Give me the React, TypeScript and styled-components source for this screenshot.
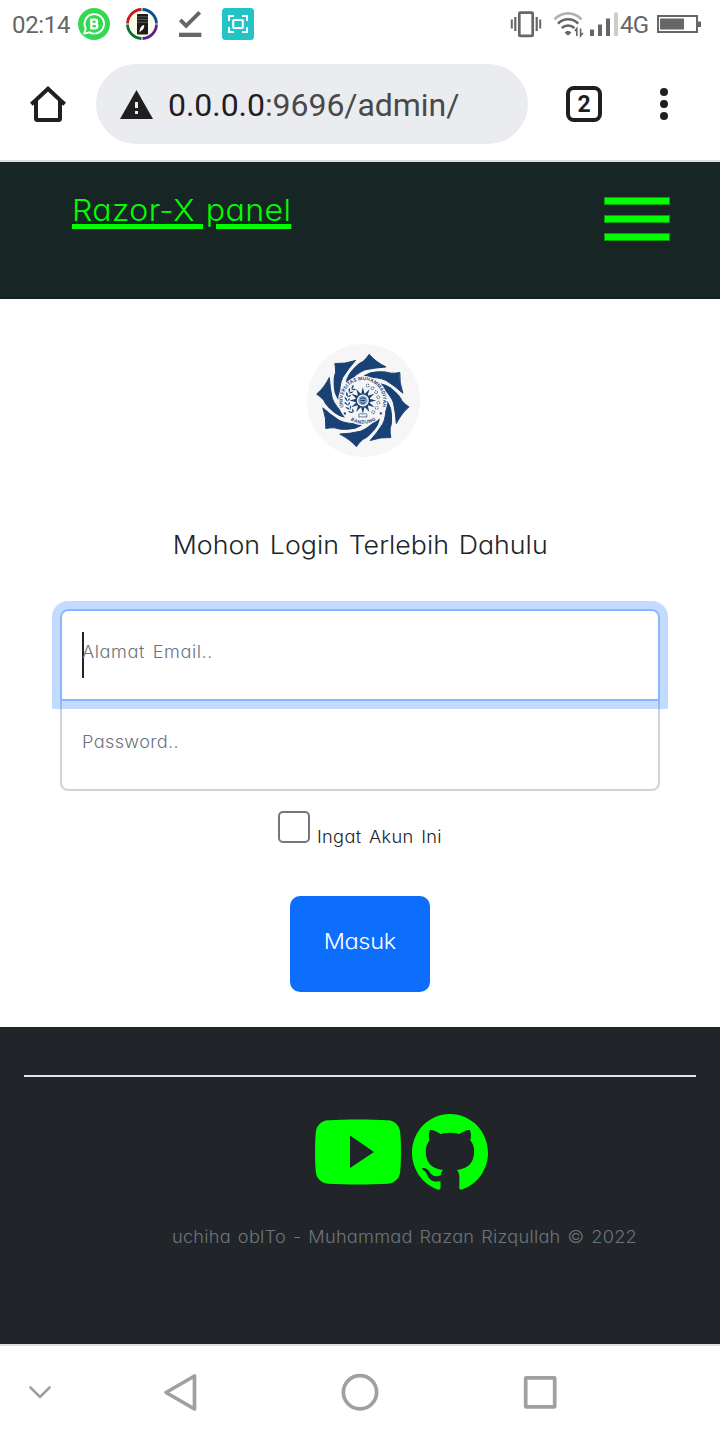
import React from "react";
import styled, { createGlobalStyle } from "styled-components";

const GlobalStyle = createGlobalStyle`
  * { box-sizing: border-box; }
  body { margin: 0; background: #fff; }
  svg { display: block; flex: none; }
`;

const panelFont = `"Inter", "Lato", sans-serif`;

const Screen = styled.div`
  width: 720px;
  height: 1440px;
  display: flex;
  flex-direction: column;
  overflow: hidden;
  background: #fff;
  font-family: ${panelFont};
  font-feature-settings: "cv11" 1;
  font-weight: 300;
  color: #212529;
`;

/* The panel's wide lettering */
const WideText = styled.span<{ $spacing: number; $word: number; $origin?: string }>`
  display: inline-block;
  transform: scaleX(1.07);
  transform-origin: ${(p) => p.$origin ?? "left"};
  letter-spacing: ${(p) => p.$spacing}px;
  word-spacing: ${(p) => p.$word}px;
  white-space: nowrap;
`;

/* System status bar */
const StatusBar = styled.div`
  height: 48px;
  flex: none;
  display: flex;
  align-items: center;
  padding: 0 18px 0 12px;
  font-family: Roboto, sans-serif;
  font-weight: 400;
  color: #666;
`;
const Clock = styled.span`
  width: 66px;
  font-size: 24px;
  line-height: 48px;
  padding-top: 2px;
  letter-spacing: -0.35px;
  white-space: nowrap;
`;
const Notices = styled.div`
  display: flex;
  gap: 16px;
  flex: 1;
`;
const Signals = styled.div`
  display: flex;
  align-items: center;
`;
const Spacer = styled.span<{ $w: number }>`
  width: ${(p) => p.$w}px;
`;
const Network = styled.span`
  width: 37px;
  font-size: 24px;
  line-height: 48px;
  padding-top: 2px;
  letter-spacing: -0.8px;
`;

/* Browser toolbar */
const Toolbar = styled.div`
  height: 114px;
  flex: none;
  display: flex;
  align-items: center;
  padding: 0 36px 0 28px;
  border-bottom: 2px solid #dcdfde;
`;
const AddressPill = styled.div`
  width: 432px;
  height: 80px;
  margin: 0 38px 0 28px;
  padding-left: 24px;
  border-radius: 40px;
  background: #ebecf0;
  display: flex;
  align-items: center;
  gap: 15px;
`;
const Address = styled.span`
  font-family: Roboto, sans-serif;
  font-weight: 400;
  font-size: 32px;
  line-height: 40px;
  padding-top: 2px;
  color: #47494b;
  letter-spacing: -0.05px;
  white-space: nowrap;
  b { font-weight: 400; color: #1f1f1f; }
`;
const TabCount = styled.div`
  width: 36px;
  height: 36px;
  border: 4px solid #1f1f1f;
  border-radius: 8px;
  color: #1f1f1f;
  font: 700 23px/29px Roboto, sans-serif;
  text-align: center;
  margin-right: 58px;
`;
const Dots = styled.div`
  display: flex;
  flex-direction: column;
  gap: 4px;
  i { width: 8px; height: 8px; border-radius: 50%; background: #1f1f1f; }
`;

/* Site header */
const SiteHeader = styled.header`
  height: 137px;
  flex: none;
  display: flex;
  justify-content: space-between;
  align-items: flex-start;
  padding: 28px 50px 0 72px;
  background: #172624;
  border-bottom: 2px solid #14201f;
`;
const Brand = styled(WideText)`
  font-size: 30px;
  line-height: 40px;
  color: #0f0;
  text-decoration: underline;
  text-decoration-thickness: 5px;
  text-underline-offset: 3px;
`;
const MenuButton = styled.div`
  display: flex;
  flex-direction: column;
  gap: 10px;
  padding-top: 7px;
  i { width: 66px; height: 8px; background: #0f0; border: 1px solid #099e0a; }
`;

/* Login form */
const Main = styled.main`
  height: 728px;
  flex: none;
  display: flex;
  flex-direction: column;
  align-items: center;
  padding-top: 45px;
`;
const LogoWrap = styled.div`
  padding-left: 6px;
  height: 113px;
`;
const Heading = styled.h1`
  margin: 68px 0 44px;
  font-size: 25px;
  line-height: 40px;
  font-weight: 300;
`;
const Field = styled.div<{ $focused?: boolean }>`
  width: 600px;
  height: 92px;
  flex: none;
  display: flex;
  position: relative;
  z-index: ${(p) => (p.$focused ? 1 : 0)};
  border: 2px solid ${(p) => (p.$focused ? "#86b7fe" : "#ced4da")};
  border-radius: ${(p) => (p.$focused ? "8px 8px 0 0" : "0 0 8px 8px")};
  box-shadow: ${(p) => (p.$focused ? "0 0 0 8px rgba(13, 110, 253, 0.25)" : "none")};
  margin-top: ${(p) => (p.$focused ? 0 : "-2px")};
  padding: 21px 20px;
`;
const Caret = styled.i`
  width: 2px;
  height: 46px;
  margin-right: -2px;
  background: #212529;
`;
const Placeholder = styled(WideText)`
  font-size: 17px;
  line-height: 40px;
  color: #6c757d;
`;
const Remember = styled.label`
  width: 164px;
  margin-top: 20px;
  height: 46px;
  display: flex;
  gap: 7px;
  font-size: 17px;
  line-height: 52px;
`;
const Checkbox = styled.i`
  width: 32px;
  height: 32px;
  flex: none;
  border: 2px solid #767676;
  border-radius: 5px;
`;
const Submit = styled.button`
  width: 140px;
  height: 96px;
  flex: none;
  margin-top: 39px;
  padding: 0 0 6px;
  border: 0;
  border-radius: 10px;
  background: #0d6efd;
  color: #fff;
  font: inherit;
  font-feature-settings: inherit;
  font-size: 22px;
`;

/* Site footer */
const Footer = styled.footer`
  height: 317px;
  flex: none;
  padding: 48px 24px 0;
  background: #212529;
`;
const Rule = styled.div`
  height: 2px;
  background: #e4e5e5;
`;
const Socials = styled.div`
  display: flex;
  align-items: center;
  gap: 11px;
  margin: 37px 0 0 291px;
`;
const Credit = styled.p`
  margin: 27px 0 0 148px;
  font-size: 17px;
  line-height: 40px;
  color: #6c757d;
`;

/* System navigation */
const NavBar = styled.nav`
  height: 96px;
  flex: none;
  display: grid;
  grid-template-columns: 134px 178px 180px 40px;
  align-items: center;
  padding: 0 0 2px 28px;
  border-top: 2px solid #dedfe0;
`;

const Business = () => (
  <svg width="32" height="32" viewBox="0 0 32 32">
    <circle cx="16" cy="16" r="16" fill="#36d853" />
    <path d="M6.200 25.600 7.700 20.400A9.700 9.700 0 1 1 11.500 24.300Z" fill="none" stroke="#fff" strokeWidth="1.900" strokeLinejoin="round" />
    <path d="M13.400 11.700h3.600a2 2 0 0 1 0 4.100h-3.600zM13.400 15.800h4.100a2.300 2.300 0 0 1 0 4.500h-4.100z" fill="none" stroke="#fff" strokeWidth="2.300" />
  </svg>
);

const ColorRing = () => (
  <svg width="32" height="32" viewBox="0 0 32 32">
    <circle cx="16" cy="16" r="14.500" fill="#fbfcec" />
    <g fill="none" strokeWidth="2.800">
      <path d="M1.500 15.500A14.500 14.500 0 0 1 15.500 1.500" stroke="#c81b1b" />
      <path d="M16.500 1.500A14.500 14.500 0 0 1 30.500 15.500" stroke="#0b4b93" />
      <path d="M30.500 16.500A14.500 14.500 0 0 1 16.500 30.500" stroke="#5b2389" />
      <path d="M15.500 30.500A14.500 14.500 0 0 1 1.500 16.500" stroke="#0c7030" />
    </g>
    <rect x="11" y="6" width="11" height="20.500" rx=".8" fill="#1d1b1c" />
    <path d="M11 8.800h11M11 11.500h11M11 14.200h11" stroke="#77736d" strokeWidth=".7" />
    <path d="M13.500 24.500c.2-4.500 1.600-7 4.700-7.600.2 2.600-.8 5-3.200 5.800z" fill="#fff" />
  </svg>
);

const Downloaded = () => (
  <svg width="32" height="32" viewBox="0 0 32 32">
    <path d="m6.300 11.800 5.800 6L25.700 4.300" fill="none" stroke="#666" strokeWidth="3.900" />
    <path d="M5 24.700h22.300V29H5z" fill="#666" />
  </svg>
);

const Scanner = () => (
  <svg width="32" height="32" viewBox="0 0 32 32">
    <rect width="32" height="32" rx="3.500" fill="#24c4c6" />
    <g fill="none" stroke="#fff" strokeWidth="2">
      <path d="M7 13V8h5M20 8h5v5M25 19v5h-5M12 24H7v-5" />
      <rect x="11.200" y="12" width="9.600" height="8" rx=".8" />
    </g>
  </svg>
);

const Vibrate = () => (
  <svg width="32" height="30" viewBox="0 0 32 30">
    <g fill="none" stroke="#666">
      <rect x="9.300" y="3.700" width="13.400" height="23.200" rx="1" strokeWidth="2.700" />
      <path d="M5.300 8v14M26.700 8v14" strokeWidth="2.200" />
      <path d="M1.800 10.500v9M30.200 10.500v9" strokeWidth="2" />
    </g>
  </svg>
);

const Wifi = () => (
  <svg width="32" height="30" viewBox="0 0 32 30">
    <g fill="none" strokeWidth="2.600">
      <path d="M1.500 10.500a18 18 0 0 1 27 0" stroke="#b2b2b2" />
      <path d="M5 14.700a13.600 13.600 0 0 1 20.200 0M8.800 19a9.200 9.200 0 0 1 12.600 0" stroke="#666" />
      <path d="M23.800 27v-7.500l-2 2.600M27.600 19.500v7.300l2.300-2.800" stroke="#666" strokeWidth="1.600" />
    </g>
    <path d="M15 26.200 12 23.600a4.600 4.600 0 0 1 6 0z" fill="#666" stroke="#666" />
  </svg>
);

const Bars = () => (
  <svg width="29" height="30" viewBox="0 0 29 30">
    <path d="M0 20.500h4V27H0zM8 15.500h4V27H8zM16 9.500h4V27h-4z" fill="#666" />
    <path d="M24 3.500h4V27h-4z" fill="#ccc" />
  </svg>
);

const Battery = () => (
  <svg width="45" height="20" viewBox="0 0 45 20">
    <rect x="1" y="2" width="39" height="16" fill="none" stroke="#666" strokeWidth="2" />
    <path d="M3 4.500h24v11H3zM41 7.500h3v5.500h-3z" fill="#666" />
  </svg>
);

const Home = () => (
  <svg width="40" height="40" viewBox="0 0 40 40">
    <g fill="none" stroke="#1f1f1f" strokeWidth="4">
      <path d="M8 16v18.500a1.500 1.500 0 0 0 1.500 1.500h21a1.500 1.500 0 0 0 1.500-1.500V16" />
      <path d="M3.400 20.300 20 4.800l16.600 15.500" />
    </g>
  </svg>
);

const Warning = () => (
  <svg width="33" height="29" viewBox="0 0 33 29">
    <path d="M16.500 0 33 29H0z" fill="#1f1f1f" />
    <path d="M15 12h3v6h-3zM15 21h3v3h-3z" fill="#ebecf0" />
  </svg>
);

const BLADE =
  "M-84-111Q-54-109-22-120Q-42-98-60-70Q-72-46-69-2L-74-4Q-86-22-86-44Q-88-70-82-84Q-81-97-84-111Z";
const blades = Array.from({ length: 8 }, (_, i) => i * 45);
const rays = Array.from({ length: 12 }, (_, i) => i * 30);
const sprigs = [0, 1, 2, 3, 4, 5, 6];

const Logo = () => (
  <svg width="113" height="113" viewBox="-169.500 -169.500 339 339">
    <circle r="169.500" fill="#f6f6f6" />
    <g fill="#1a4175" transform="translate(-2 0)">
      {blades.map((a) => (
        <path key={a} d={BLADE} transform={`rotate(${a})`} stroke="#1a4175" strokeWidth="3" />
      ))}
      <circle r="74" fill="#f6f6f6" />
      {rays.map((a) => (
        <path key={a} d="M-5-20L0-40L5-20Z" transform={`rotate(${a})`} />
      ))}
      <circle r="20" fill="none" stroke="#1a4175" strokeWidth="4" />
      <circle r="14" fill="#8da2bc" />
      <path d="M-8-5Q0-11 8-5M-7 0H7M-7 6Q0 11 7 6" fill="none" stroke="#1a4175" strokeWidth="3" />
      {sprigs.map((i) => (
        <g key={i}>
          <path d="M-47 0q-8-6-7-15q8 4 7 15q8-2 10-10q-8 1-10 10" transform={`rotate(${-52 + i * 16})`} />
          <circle cx="47" cy="0" r="4.500" fill="none" stroke="#1a4175" strokeWidth="2.500" strokeDasharray="4 2" transform={`rotate(${-72 + i * 20})`} />
        </g>
      ))}
      <path d="M-12 41q6-3 12 0q6-3 12 0v9q-6-3-12 0q-6-3-12 0z" fill="#f6f6f6" stroke="#1a4175" strokeWidth="2" />
      <defs>
        <path id="ringTop" d="M-57.600 20A61 61 0 1 1 57.600 20" />
        <path id="ringBottom" d="M-47.300 51.500A70 70 0 0 0 47.300 51.500" />
      </defs>
      <g fontFamily="Inter, sans-serif" fontWeight="600" fontSize="14">
        <text><textPath href="#ringTop" textLength="230">UNIVERSITAS MUHAMMADIYAH</textPath></text>
        <text><textPath href="#ringBottom" startOffset="13" textLength="80">BANDUNG</textPath></text>
      </g>
      <circle cx="-54" cy="39" r="3.500" />
      <circle cx="54" cy="39" r="3.500" />
    </g>
  </svg>
);

const YouTube = () => (
  <svg width="86" height="66" viewBox="0 0 86 66">
    <path
      d="M43 .5C56 .5 67 1 73 1.300C80 1.700 84.800 7 85.300 14C86.200 26 86.200 40 85.300 52C84.800 59 80 64.300 73 64.700C56 65.700 30 65.700 13 64.700C6 64.300 1.200 59 .7 52C-.2 40-.2 26 .7 14C1.200 7 6 1.700 13 1.300C19 1 30 .5 43 .5ZM35 16.500V49L59 33Z"
      fill="#0f0"
      fillRule="evenodd"
    />
  </svg>
);

const GitHub = () => (
  <svg width="76" height="76" viewBox="0 .297 24 23.500" preserveAspectRatio="none">
    <path
      fill="#0f0"
      d="M12 .297c-6.630 0-12 5.373-12 12 0 5.303 3.438 9.800 8.205 11.385.6.113.82-.258.82-.577 0-.285-.010-1.040-.015-2.040-3.338.724-4.042-1.610-4.042-1.610C4.422 18.070 3.633 17.700 3.633 17.700c-1.087-.744.084-.729.084-.729 1.205.084 1.838 1.236 1.838 1.236 1.070 1.835 2.809 1.305 3.495.998.108-.776.417-1.305.760-1.605-2.665-.300-5.466-1.332-5.466-5.930 0-1.310.465-2.380 1.235-3.220-.135-.303-.540-1.523.105-3.176 0 0 1.005-.322 3.300 1.230.960-.267 1.980-.399 3-.405 1.020.006 2.040.138 3 .405 2.280-1.552 3.285-1.230 3.285-1.230.645 1.653.240 2.873.120 3.176.765.840 1.230 1.910 1.230 3.220 0 4.610-2.805 5.625-5.475 5.920.420.360.810 1.096.810 2.220 0 1.606-.015 2.896-.015 3.286 0 .315.210.690.825.570C20.565 22.092 24 17.592 24 12.297c0-6.627-5.373-12-12-12"
    />
  </svg>
);

const CollapseIcon = () => (
  <svg width="24" height="40" viewBox="0 0 24 40">
    <path d="m2.500 15.500 9.500 9.500 9.500-9.500" fill="none" stroke="#a0a0a0" strokeWidth="2.600" strokeLinecap="round" />
  </svg>
);
const BackIcon = () => (
  <svg width="40" height="40" viewBox="0 0 40 40">
    <path d="M4 20.500 32.500 4v33z" fill="none" stroke="#a0a0a0" strokeWidth="3.700" strokeLinejoin="round" />
  </svg>
);
const HomeKeyIcon = () => (
  <svg width="40" height="40" viewBox="0 0 40 40">
    <circle cx="20" cy="20.300" r="16.600" fill="none" stroke="#a0a0a0" strokeWidth="3.700" />
  </svg>
);
const RecentsIcon = () => (
  <svg width="40" height="40" viewBox="0 0 40 40">
    <rect x="5.700" y="5.900" width="29" height="29" rx=".5" fill="none" stroke="#a0a0a0" strokeWidth="3.700" />
  </svg>
);

export default function App() {
  return (
    <>
      <GlobalStyle />
      <Screen>
        <StatusBar>
          <Clock>02:14</Clock>
          <Notices>
            <Business />
            <ColorRing />
            <Downloaded />
            <Scanner />
          </Notices>
          <Signals>
            <Vibrate />
            <Spacer $w={11} />
            <Wifi />
            <Spacer $w={5} />
            <Bars />
            <Spacer $w={1} />
            <Network>4G</Network>
            <Battery />
          </Signals>
        </StatusBar>
        <Toolbar>
          <Home />
          <AddressPill>
            <Warning />
            <Address><b>0.0.0.0</b>:9696/admin/</Address>
          </AddressPill>
          <TabCount>2</TabCount>
          <Dots><i /><i /><i /></Dots>
        </Toolbar>
        <SiteHeader>
          <Brand $spacing={0.35} $word={1.5}>Razor-X panel</Brand>
          <MenuButton><i /><i /><i /></MenuButton>
        </SiteHeader>
        <Main>
          <LogoWrap><Logo /></LogoWrap>
          <Heading>
            <WideText $spacing={0.02} $word={2} $origin="center">Mohon Login Terlebih Dahulu</WideText>
          </Heading>
          <Field $focused>
            <Caret />
            <Placeholder $spacing={0.5} $word={2}>Alamat Email..</Placeholder>
          </Field>
          <Field>
            <Placeholder $spacing={0.3} $word={0}>Password..</Placeholder>
          </Field>
          <Remember>
            <Checkbox />
            <WideText $spacing={0.3} $word={2}>Ingat Akun Ini</WideText>
          </Remember>
          <Submit>
            <WideText $spacing={-0.3} $word={0} $origin="center">Masuk</WideText>
          </Submit>
        </Main>
        <Footer>
          <Rule />
          <Socials><YouTube /><GitHub /></Socials>
          <Credit>
            <WideText $spacing={0.22} $word={1.5}>uchiha oblTo - Muhammad Razan Rizqullah © 2022</WideText>
          </Credit>
        </Footer>
        <NavBar>
          <CollapseIcon />
          <BackIcon />
          <HomeKeyIcon />
          <RecentsIcon />
        </NavBar>
      </Screen>
    </>
  );
}
